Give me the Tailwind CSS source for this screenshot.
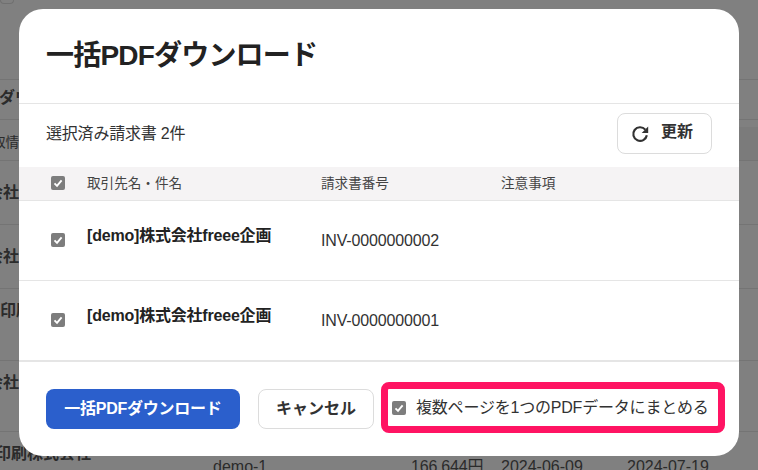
<!DOCTYPE html>
<html lang="ja">
<head>
<meta charset="utf-8">
<script src="https://cdn.jsdelivr.net/npm/@tailwindcss/browser@4"></script>
</head>
<body class="m-0 overflow-hidden">
<div class="relative w-[758px] h-[470px] overflow-hidden bg-[#808080] text-[#323232] font-['Liberation_Sans','Noto_Sans_CJK_JP',sans-serif]">
  <!-- page behind the dialog -->
  <div class="flex flex-col h-[470px] text-[#2b2b2b]">
    <div class="h-[4px] w-[14px] rounded-b-[4px] border border-t-0 border-[#707070]"></div>
    <div class="h-[76px] border-b border-[#747474]"></div>
    <div class="h-[40px] border-b border-[#747474] flex items-center text-[16px] font-bold leading-none whitespace-nowrap"><span class="ml-[-1px] mt-[-3px]">ダウ</span></div>
    <div class="h-[41px] border-b border-[#747474] flex items-center text-[13.6px] whitespace-nowrap"><span class="ml-[-8px] mt-[6px]">取情報</span></div>
    <div class="h-[64px] border-b border-[#747474] flex items-center text-[16px] font-bold whitespace-nowrap"><span class="ml-[-13px]">会社</span></div>
    <div class="h-[64px] border-b border-[#747474] flex items-center text-[16px] font-bold whitespace-nowrap"><span class="ml-[-13px]">会社</span></div>
    <div class="h-[72px] border-b border-[#747474] flex items-center text-[16px] font-bold whitespace-nowrap"><span class="mt-[-28px]">印刷</span></div>
    <div class="h-[71px] border-b border-[#747474] flex items-center text-[16px] font-bold whitespace-nowrap"><span class="ml-[-13px] mt-[-27px]">会社</span></div>
    <div class="relative flex-1 whitespace-nowrap">
      <span class="absolute left-[-5px] top-[14px] text-[16px] font-bold leading-none">印刷株式会社</span>
      <span class="absolute left-[213px] top-[27px] text-[16px] leading-none">demo-1</span>
      <span class="absolute left-[411px] top-[27px] text-[16px] tracking-[-0.2px] leading-none">166,644円</span>
      <span class="absolute left-[501px] top-[27px] text-[16px] leading-none">2024-06-09</span>
      <span class="absolute left-[627px] top-[27px] text-[16px] leading-none">2024-07-19</span>
    </div>
  </div>
  <div class="absolute right-0 top-[127px] w-[19px] h-[33px] bg-[#7b7b7b]"></div>

  <!-- dialog -->
  <div class="absolute left-[19px] top-[9px] w-[720px] h-[447px] bg-white rounded-[24px] flex flex-col overflow-hidden">
    <div class="h-[95px] shrink-0 border-b border-[#e5e5e5] pl-[27px] pt-[29px]">
      <h1 class="text-[28px] leading-[36px] tracking-[-0.8px] font-bold text-[#222]">一括PDFダウンロード</h1>
    </div>
    <div class="h-[63px] shrink-0 flex items-center justify-between pl-[27px] pr-[27px] pb-[4px]">
      <span class="text-[16px] tracking-[-0.2px] text-[#323232]">選択済み請求書 2件</span>
      <button class="w-[95px] h-[41px] rounded-[8px] border border-[#dcdcdc] bg-white flex items-center justify-start pl-[12px] gap-[11px] text-[16px] font-bold text-[#323232]">
        <svg class="w-[20px] h-[20px] mt-[1px]" viewBox="0 0 24 24" fill="none"><path d="M18.4 6.8A8.2 8.2 0 1 0 20.2 13.5" stroke="#323232" stroke-width="2.6"/><path d="M21.8 3V10.8H14Z" fill="#323232"/></svg>
        <span class="mt-[-4px]">更新</span>
      </button>
    </div>
    <div class="h-[34px] shrink-0 bg-[#f5f3f4] border-b border-[#e5e5e5] flex items-center text-[13.6px] text-[#444]">
      <div class="w-[68px] pl-[32px] flex items-center mt-[-1px]">
        <span class="w-[14px] h-[14px] rounded-[2px] bg-[#7d7d7d] flex items-center justify-center"><svg class="w-[10px] h-[10px]" viewBox="0 0 10 10" fill="none"><path d="M1.5 5.3 4 7.8 8.6 2.3" stroke="#fff" stroke-width="1.9"/></svg></span>
      </div>
      <div class="w-[234px] pt-[1px]">取引先名・件名</div>
      <div class="w-[180px] pt-[1px]">請求書番号</div>
      <div class="pt-[1px]">注意事項</div>
    </div>
    <div class="h-[80px] shrink-0 border-b border-[#e5e5e5] flex text-[16px]">
      <div class="w-[68px] pl-[32px] pt-[32px]">
        <span class="w-[14px] h-[14px] rounded-[2px] bg-[#7d7d7d] flex items-center justify-center"><svg class="w-[10px] h-[10px]" viewBox="0 0 10 10" fill="none"><path d="M1.5 5.3 4 7.8 8.6 2.3" stroke="#fff" stroke-width="1.9"/></svg></span>
      </div>
      <div class="w-[234px] pt-[24px] font-bold tracking-[-0.2px] text-[#222] leading-[21px] whitespace-nowrap">[demo]株式会社freee企画</div>
      <div class="pt-[29px] tracking-[-0.15px] leading-[21px]">INV-0000000002</div>
    </div>
    <div class="h-[79px] shrink-0 flex text-[16px]">
      <div class="w-[68px] pl-[32px] pt-[32px]">
        <span class="w-[14px] h-[14px] rounded-[2px] bg-[#7d7d7d] flex items-center justify-center"><svg class="w-[10px] h-[10px]" viewBox="0 0 10 10" fill="none"><path d="M1.5 5.3 4 7.8 8.6 2.3" stroke="#fff" stroke-width="1.9"/></svg></span>
      </div>
      <div class="w-[234px] pt-[24px] font-bold tracking-[-0.2px] text-[#222] leading-[21px] whitespace-nowrap">[demo]株式会社freee企画</div>
      <div class="pt-[29px] tracking-[-0.15px] leading-[21px]">INV-0000000001</div>
    </div>
    <div class="flex-1 border-t-2 border-[#e5e5e5] relative flex items-start pl-[27px] pt-[27px]">
      <button class="w-[194px] h-[40px] rounded-[8px] bg-[#2b5fcc] text-white font-bold text-[16px] tracking-[-0.25px] whitespace-nowrap">一括PDFダウンロード</button>
      <button class="ml-[18px] w-[116px] h-[40px] rounded-[8px] border border-[#dcdcdc] bg-white font-bold text-[16px] text-[#323232]">キャンセル</button>
      <label class="ml-[18px] mt-[5px] flex items-center gap-[10px] text-[16px] tracking-[-0.2px] text-[#323232] h-[28px] whitespace-nowrap">
        <span class="w-[14px] h-[14px] rounded-[2px] bg-[#7d7d7d] flex items-center justify-center"><svg class="w-[10px] h-[10px]" viewBox="0 0 10 10" fill="none"><path d="M1.5 5.3 4 7.8 8.6 2.3" stroke="#fff" stroke-width="1.9"/></svg></span>
        <span>複数ページを1つのPDFデータにまとめる</span>
      </label>
      <div class="absolute left-[362px] top-[20px] w-[344px] h-[51px] rounded-[8px] border-[7px] border-[#ff1463]"></div>
    </div>
  </div>
</div>
</body>
</html>
